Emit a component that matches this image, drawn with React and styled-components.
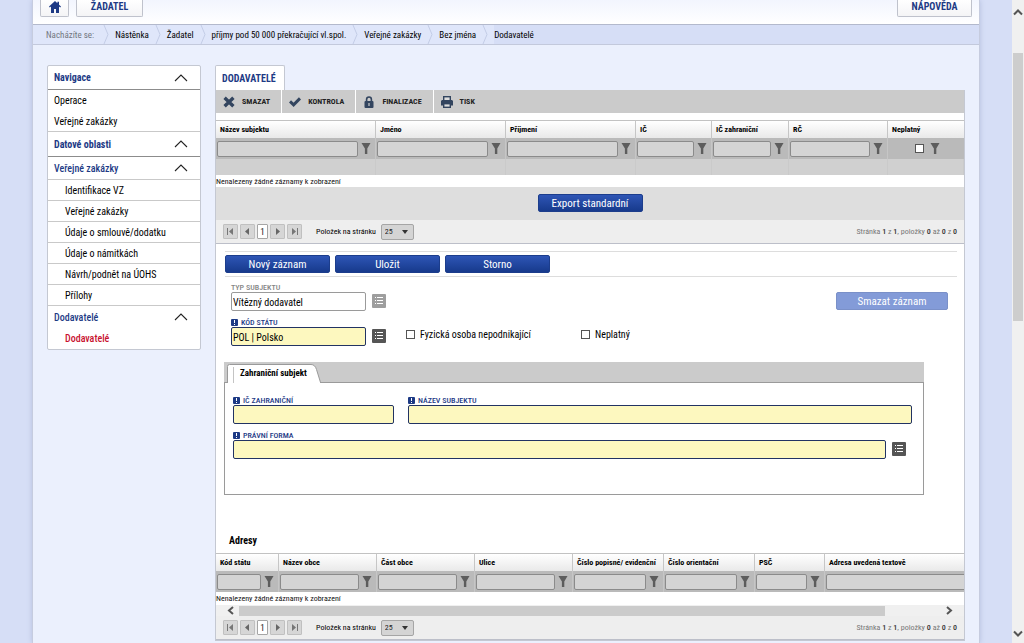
import React from 'react';
import styled, { createGlobalStyle, css } from 'styled-components';

const GlobalStyle = createGlobalStyle`
  * {
    box-sizing: border-box;
  }

  body {
    margin: 0;
    background: #d6def6;
    color: #000000;
    font-family: 'Roboto Condensed', 'Liberation Sans Narrow', Roboto, sans-serif;
    font-size: 10px;
  }

  button,
  input,
  select {
    margin: 0;
    font-family: inherit;
  }
`;

const Shell = styled.div`
  display: flex;
  height: 100vh;
  overflow: hidden;
`;

const Viewport = styled.div`
  flex: 1;
  min-width: 0;
  padding: 0 32px;
  overflow: hidden;
`;

const Page = styled.div`
  min-height: 100%;
  background: #ebf0fd;
  border-left: 1px solid #c6ccdf;
  border-right: 1px solid #c6ccdf;
  box-shadow: 0 0 5px #b4bedd;
`;

const Rail = styled.div`
  display: flex;
  flex-direction: column;
  justify-content: space-between;
  width: 12px;
  padding: 9px 1px 6px;
  background: #f0f0f0;

  svg {
    flex: none;
    width: 10px;
    height: 7px;
  }
`;

const RailTrack = styled.div`
  flex: 1;
  padding-top: 37px;
`;

const RailThumb = styled.div`
  height: 46.5%;
  background: #cdcdcd;
`;

const Header = styled.header`
  display: flex;
  gap: 7px;
  height: 25px;
  padding: 0 7px;
  background: linear-gradient(#f2f5fe, #ffffff);
  border-bottom: 1px solid #b3b9cc;
`;

const HeaderButton = styled.button`
  display: flex;
  align-items: center;
  justify-content: center;
  width: ${(props) => props.$width}px;
  height: 17px;
  padding: 0 0 3px;
  background: linear-gradient(#ffffff, #f4f4f6);
  border: 1px solid #bfc2cc;
  border-top: 0;
  border-radius: 0 0 2px 2px;
  color: #1d3a85;
  font-size: 10px;
  font-weight: 700;

  &:last-child {
    margin-left: auto;
  }
`;

const Breadcrumb = styled.nav`
  display: flex;
  align-items: center;
  height: 20px;
  background: #d6def6;
  border-bottom: 1px solid #c3c9dc;
  font-size: 9px;

  a {
    color: #000000;
    text-decoration: none;
  }

  svg {
    width: 7px;
    height: 19px;
    margin: 0 5px 0 6px;
  }
`;

const Crumbs = styled.div`
  display: flex;
  align-items: center;
  height: 19px;
  padding-left: 13px;
  background: #dfe6fa;
`;

const CrumbLabel = styled.span`
  padding-right: 3px;
  color: #73767f;
`;

const Columns = styled.div`
  display: flex;
  align-items: flex-start;
  gap: 14px;
  padding: 20px 14px 0;
`;

const Sidebar = styled.nav`
  flex: none;
  width: 154px;
  background: #ffffff;
  border: 1px solid #c4c8d2;
  border-radius: 2px;
`;

const NavItem = styled.a`
  display: flex;
  align-items: center;
  justify-content: space-between;
  height: ${(props) => props.$height || 21}px;
  padding: 0 12px 0 ${(props) => (props.$nested ? 17 : 6)}px;
  border-bottom: ${(props) => (props.$line ? `1px solid ${props.$line}` : '0')};
  color: ${(props) => props.$color || '#000000'};
  font-weight: ${(props) => (props.$bold ? 700 : props.$color ? 500 : 400)};
  text-decoration: none;

  svg {
    width: 14px;
    height: 8px;
  }
`;

const Main = styled.main`
  flex: 1;
  min-width: 0;
`;

const PageTab = styled.h1`
  display: inline-block;
  height: 25px;
  margin: 0;
  padding: 0 8px 0 6px;
  background: #ffffff;
  border: 1px solid #c4c8d2;
  border-bottom: 0;
  border-radius: 2px 2px 0 0;
  color: #1d3a85;
  font-size: 10px;
  font-weight: 700;
  line-height: 25px;
  vertical-align: top;
`;

const Panel = styled.section`
  background: #ffffff;
  border: 1px solid #c4c8d2;
  border-top: 0;
`;

const Toolbar = styled.div`
  display: flex;
  height: 23px;
  margin-bottom: 7px;
  background: #cbcbcb;
`;

const ToolButton = styled.button`
  display: flex;
  align-items: center;
  gap: 7px;
  padding: 0 11px 0 7px;
  background: none;
  border: 0;
  border-right: ${(props) => (props.$last ? 0 : '1px solid #ffffff')};
  color: #222222;
  font-size: 8px;
  font-weight: 700;

  svg {
    width: 12px;
    height: 12px;
  }
`;

const TableClip = styled.div`
  overflow: hidden;
`;

const Table = styled.table`
  width: 100%;
  min-width: ${(props) => props.$min || 0}px;
  table-layout: fixed;
  border-collapse: separate;
  border-spacing: 0;

  th,
  td {
    padding: 0;
  }
`;

const HeadCell = styled.th`
  height: 18px;
  background: linear-gradient(#ffffff, #e9e9e9);
  border-top: 1px solid #c2c2c2;
  border-right: 1px solid #c6c6c6;

  span {
    display: block;
    padding-left: 4px;
    font-size: 8px;
    line-height: 17px;
    text-align: left;
    white-space: nowrap;
  }

  &:last-child {
    border-right: 0;
  }
`;

const FilterCell = styled.td`
  background: #bababa;
  border-right: 1px solid #c6c6c6;

  &:last-child {
    border-right: 0;
  }
`;

const FilterBox = styled.div`
  display: flex;
  align-items: center;
  justify-content: ${(props) => (props.$center ? 'center' : 'flex-start')};
  gap: ${(props) => (props.$center ? 6 : 3)}px;
  height: 21px;
  padding: ${(props) => (props.$center ? '0 0 0 3px' : '0 4px 0 1px')};

  svg {
    flex: none;
    width: 10px;
    height: 11px;
  }
`;

const FilterInput = styled.input`
  flex: 1;
  min-width: 0;
  height: 16px;
  padding: 0 2px;
  background: #d4d4d4;
  border: 1px solid #8b8b8b;
  border-radius: 2px;
  font-size: 9px;
`;

const EmptyCell = styled.td`
  height: 16px;
  background: #d0d0d0;
  border-right: 1px solid #cacaca;
`;

const EmptyMessage = styled.p`
  height: ${(props) => props.$height}px;
  margin: 0;
  color: #111111;
  font-size: 8px;
  line-height: 13px;
`;

const ExportBar = styled.div`
  display: flex;
  justify-content: center;
  height: 33px;
  padding-top: 7px;
  background: #dedede;
`;

const Button = styled.button`
  width: ${(props) => props.$width || 105}px;
  height: 18px;
  padding: 0;
  background: linear-gradient(#2e55b5, #173a8c);
  border: 1px solid #1c3d8c;
  border-radius: 2px;
  color: #ffffff;
  font-size: 11px;
  line-height: 15px;

  &:disabled {
    background: #839bd8;
    border-color: #7a90c8;
  }
`;

const PagerRow = styled.div`
  display: flex;
  align-items: center;
  height: 24px;
  padding: 0 7px;
  background: #eeeeee;
  border-bottom: 1px solid #bcbfc9;
  font-size: 8px;
`;

const PagerGroup = styled.div`
  display: flex;
  gap: 2px;
  margin-right: 14px;
`;

const PagerButton = styled.button`
  display: flex;
  align-items: center;
  justify-content: center;
  width: ${(props) => (props.$current ? 11 : 15)}px;
  height: 15px;
  padding: 0;
  background: ${(props) => (props.$current ? '#ffffff' : '#d6d6d6')};
  border: 1px solid ${(props) => (props.$current ? '#a5a5a5' : '#c0c0c0')};
  border-radius: 1px;
  color: #222222;
  font-size: 9px;

  svg {
    width: 9px;
    height: 9px;
  }
`;

const PageSize = styled.label`
  display: flex;
  align-items: center;
  gap: 5px;
`;

const SelectBox = styled.span`
  display: grid;
  width: 33px;
  height: 16px;

  select,
  svg {
    grid-area: 1 / 1;
  }

  select {
    appearance: none;
    width: 33px;
    padding: 0 3px;
    background: #d4d4d4;
    border: 1px solid #a5a5a5;
    border-radius: 2px;
    color: #222222;
    font-size: 8px;
  }

  svg {
    align-self: center;
    justify-self: end;
    width: 6px;
    height: 4px;
    margin-right: 6px;
    pointer-events: none;
  }
`;

const PagerInfo = styled.span`
  margin-left: auto;
  color: #777777;

  b {
    color: #333333;
    font-weight: 500;
  }
`;

const Actions = styled.div`
  display: flex;
  gap: 5px;
  height: 26px;
  margin: 7px 7px 0 9px;
  padding-top: 3px;
  border-top: 1px solid #dddddd;
  border-bottom: 1px solid #dddddd;
`;

const FormRow = styled.div`
  display: flex;
  align-items: flex-end;
  height: ${(props) => props.$height || 35}px;
  padding: 0 16px 0 15px;

  > button:last-child {
    margin-bottom: 1px;
  }
`;

const Field = styled.div`
  display: flex;
  flex-direction: column;
  flex: ${(props) => (props.$width ? 'none' : 1)};
  width: ${(props) => (props.$width ? `${props.$width}px` : 'auto')};
  min-width: 0;
`;

const FieldLabel = styled.label`
  display: flex;
  align-items: center;
  gap: 3px;
  height: 10px;
  color: ${(props) => (props.$required ? '#1d3a85' : '#858585')};
  font-size: 8px;
  font-weight: 500;

  svg {
    width: 7px;
    height: 7px;
  }
`;

const FieldInput = styled.input`
  width: 100%;
  height: 19px;
  padding: 2px 1px 0;
  background: #ffffff;
  border: 1px solid #9a9a9a;
  border-radius: 2px;
  color: #000000;
  font-size: 10px;

  ${(props) =>
    props.$required &&
    css`
      background: #fdf8bf;
      border-color: #223363;
    `}
`;

const ListButton = styled.button`
  display: flex;
  flex: none;
  align-items: center;
  justify-content: center;
  width: 14px;
  height: 14px;
  margin: 0 0 3px 6px;
  padding: 0;
  background: ${(props) => (props.disabled ? '#9e9e9e' : '#555555')};
  border: 0;
  border-radius: 1px;

  svg {
    width: 8px;
    height: 8px;
  }
`;

const CheckLabel = styled.label`
  display: flex;
  align-items: center;
  gap: 5px;
  width: 175px;
  height: 24px;
  margin-left: ${(props) => (props.$first ? 20 : 0)}px;
`;

const Checkbox = styled.input`
  appearance: none;
  flex: none;
  width: 9px;
  height: 9px;
  background: #ffffff;
  border: 1px solid #555555;
`;

const Spacer = styled.div`
  flex: 1;
`;

const Subject = styled.section`
  margin: 16px 40px 0 8px;
  border: 1px solid #9a9a9a;
  border-top: 0;
`;

const SubjectTabs = styled.div`
  display: flex;
  align-items: flex-end;
  height: 21px;
  margin: 0 -1px;
  padding-left: 3px;
  background: #cbcbcb;
  border-bottom: 1px solid #9a9a9a;
`;

const SubjectTab = styled.h2`
  display: grid;
  width: 94px;
  height: 18px;
  margin: 0;
  font-size: 9px;
  font-weight: 700;
  line-height: 18px;

  svg,
  span {
    grid-area: 1 / 1;
  }

  svg {
    width: 94px;
    height: 19px;
  }

  span {
    padding-left: 13px;
  }
`;

const SubjectBody = styled.div`
  padding: 12px 11px 29px 8px;
`;

const SubjectRow = styled.div`
  display: flex;
  align-items: flex-end;
  gap: ${(props) => props.$gap || 0}px;
  height: 29px;
  margin-bottom: 6px;
  padding-right: ${(props) => props.$end || 0}px;
`;

const SectionTitle = styled.h2`
  height: 58px;
  margin: 0;
  padding: 40px 0 0 13px;
  font-size: 10px;
  font-weight: 700;
  line-height: 12px;
`;

const ScrollBar = styled.div`
  display: flex;
  align-items: center;
  height: 11px;
  padding: 0 11px;
  background: #f0f0f0;

  svg {
    flex: none;
    width: 7px;
    height: 9px;
  }
`;

const ScrollTrack = styled.div`
  flex: 1;
  padding: 0 5px;
`;

const ScrollThumb = styled.div`
  width: 92%;
  height: 10px;
  background: #cbcbcb;
`;

const Chevron = () => (
  <svg viewBox="0 0 14 8" fill="none" stroke="#222222" strokeWidth="1.1">
    <path d="M1 7 7 1l6 6" />
  </svg>
);

const Separator = () => (
  <svg viewBox="0 0 7 19" fill="none" stroke="#c3cce6">
    <path d="M1 0 5 9.5 1 19" />
  </svg>
);

const Funnel = () => (
  <svg viewBox="0 0 10 11" fill="#5d5d5d">
    <path d="M0.500 0h9L6.300 5.500V11H3.900V5.500z" />
  </svg>
);

const ListIcon = () => (
  <svg viewBox="0 0 8 8" fill="#ffffff">
    <path d="M0 0h1v1H0zM2 0h6v1H2zM0 3h1v1H0zM2 3h6v1H2zM0 6h1v1H0zM2 6h6v1H2z" />
  </svg>
);

const RequiredMark = () => (
  <svg viewBox="0 0 7 7">
    <rect width="7" height="7" rx="1" fill="#1d3a85" />
    <path d="M3 1h1v3H3zM3 5h1v1H3z" fill="#ffffff" />
  </svg>
);

const HomeIcon = () => (
  <svg width="12" height="12" viewBox="0 0 12 12" fill="#1d3a85">
    <path d="M6 0 0 5.6l.8.9L2 5.5V12h3V8h2v4h3V5.5l1.2 1 .8-.9-2-1.9V.8H8.4v1.4z" />
  </svg>
);

const toolbarIcons = {
  delete: (
    <svg viewBox="0 0 12 12" stroke="#33455f" strokeWidth="3.4">
      <path d="m1.6 1.8 8.8 8.4M10.4 1.8 1.6 10.2" />
    </svg>
  ),
  check: (
    <svg viewBox="0 0 12 12" fill="none" stroke="#33455f" strokeWidth="3">
      <path d="m1 5.4 3.6 3.4L11 2.4" />
    </svg>
  ),
  lock: (
    <svg viewBox="0 0 12 12">
      <path d="M3.6 6V3.4a2.4 2.4 0 0 1 4.8 0V6" fill="none" stroke="#33455f" strokeWidth="1.6" />
      <rect x="1.5" y="5" width="9" height="7" rx="1" fill="#33455f" />
      <path d="M5.4 7h1.2v3H5.4z" fill="#cbcbcb" />
    </svg>
  ),
  print: (
    <svg viewBox="0 0 12 12">
      <path d="M2 0h8v4H2z" fill="#33455f" />
      <path d="M3.400 1.400h5.200V4H3.400z" fill="#dddddd" />
      <path d="M1 4h10l1 1v4.500H0V5z" fill="#33455f" />
      <path d="M2 8h8v4H2z" fill="#33455f" />
      <path d="M3.400 8.400h5.200v2.200H3.400z" fill="#dddddd" />
    </svg>
  ),
};

const Pager = ({ id }) => (
  <PagerRow>
    <PagerGroup>
      <PagerButton type="button" aria-label="První">
        <svg viewBox="0 0 9 9" fill="#777777">
          <path d="M1 1h1v7H1zM7 1v7L3 4.5z" />
        </svg>
      </PagerButton>
      <PagerButton type="button" aria-label="Předchozí">
        <svg viewBox="0 0 9 9" fill="#666666">
          <path d="M6 1v7L2 4.5z" />
        </svg>
      </PagerButton>
      <PagerButton type="button" $current>
        1
      </PagerButton>
      <PagerButton type="button" aria-label="Další">
        <svg viewBox="0 0 9 9" fill="#666666">
          <path d="M3 1v7l4-3.500z" />
        </svg>
      </PagerButton>
      <PagerButton type="button" aria-label="Poslední">
        <svg viewBox="0 0 9 9" fill="#777777">
          <path d="M7 1h1v7H7zM2 1v7l4-3.500z" />
        </svg>
      </PagerButton>
    </PagerGroup>
    <PageSize htmlFor={id}>
      Položek na stránku
      <SelectBox>
        <select id={id} defaultValue="25">
          <option>25</option>
        </select>
        <svg viewBox="0 0 6 4" fill="#333333">
          <path d="M0 0h6L3 4z" />
        </svg>
      </SelectBox>
    </PageSize>
    <PagerInfo>
      Stránka <b>1</b> z <b>1</b>, položky <b>0</b> až <b>0</b> z <b>0</b>
    </PagerInfo>
  </PagerRow>
);

const Grid = ({ columns, min, emptyRow }) => (
  <TableClip>
    <Table $min={min}>
      <colgroup>
        {columns.map((column) => (
          <col key={column.name} width={column.width} />
        ))}
      </colgroup>
      <thead>
        <tr>
          {columns.map((column) => (
            <HeadCell key={column.name} scope="col">
              <span>{column.name}</span>
            </HeadCell>
          ))}
        </tr>
      </thead>
      <tbody>
        <tr>
          {columns.map((column) => (
            <FilterCell key={column.name}>
              <FilterBox $center={column.checkbox}>
                {column.checkbox ? (
                  <Checkbox type="checkbox" aria-label={column.name} />
                ) : (
                  <FilterInput type="text" aria-label={column.name} />
                )}
                <Funnel />
              </FilterBox>
            </FilterCell>
          ))}
        </tr>
        {emptyRow && (
          <tr>
            {columns.map((column) => (
              <EmptyCell key={column.name} />
            ))}
          </tr>
        )}
      </tbody>
    </Table>
  </TableClip>
);

const TextField = ({ id, label, value, width, required, disabled }) => (
  <Field $width={width}>
    <FieldLabel htmlFor={id} $required={required}>
      {required && <RequiredMark />}
      {label}
    </FieldLabel>
    <FieldInput id={id} type="text" defaultValue={value} $required={required} readOnly={disabled} />
  </Field>
);

const crumbs = ['Nástěnka', 'Žadatel', 'příjmy pod 50 000 překračující vl.spol.', 'Veřejné zakázky', 'Bez jména'];

const navItems = [
  { name: 'Navigace', height: 24, bold: true, color: '#1d3a85', line: '#8c8c8c', open: true },
  { name: 'Operace' },
  { name: 'Veřejné zakázky', line: '#c9c9c9' },
  { name: 'Datové oblasti', height: 25, bold: true, color: '#1d3a85', line: '#8c8c8c', open: true },
  { name: 'Veřejné zakázky', height: 23, color: '#1d3a85', line: '#c9c9c9', open: true },
  { name: 'Identifikace VZ', nested: true, line: '#c9c9c9' },
  { name: 'Veřejné zakázky', nested: true, line: '#c9c9c9' },
  { name: 'Údaje o smlouvě/dodatku', nested: true, line: '#c9c9c9' },
  { name: 'Údaje o námitkách', nested: true, line: '#c9c9c9' },
  { name: 'Návrh/podnět na ÚOHS', nested: true, line: '#c9c9c9' },
  { name: 'Přílohy', nested: true, line: '#c9c9c9' },
  { name: 'Dodavatelé', height: 22, color: '#1d3a85', open: true },
  { name: 'Dodavatelé', nested: true, color: '#c8102e' },
];

const tools = [
  { name: 'SMAZAT', icon: 'delete' },
  { name: 'KONTROLA', icon: 'check' },
  { name: 'FINALIZACE', icon: 'lock' },
  { name: 'TISK', icon: 'print' },
];

const supplierColumns = [
  { name: 'Název subjektu', width: 160 },
  { name: 'Jméno', width: 130 },
  { name: 'Příjmení', width: 130 },
  { name: 'IČ', width: 76 },
  { name: 'IČ zahraniční', width: 77 },
  { name: 'RČ', width: 99 },
  { name: 'Neplatný', checkbox: true },
];

const addressColumns = [
  { name: 'Kód státu', width: 63 },
  { name: 'Název obce', width: 98 },
  { name: 'Část obce', width: 98 },
  { name: 'Ulice', width: 98 },
  { name: 'Číslo popisné/ evidenční', width: 91 },
  { name: 'Číslo orientační', width: 91 },
  { name: 'PSČ', width: 70 },
  { name: 'Adresa uvedená textově' },
];

const App = () => (
  <Shell>
    <GlobalStyle />
    <Viewport>
      <Page>
        <Header>
          <HeaderButton type="button" aria-label="Domů" $width={29}>
            <HomeIcon />
          </HeaderButton>
          <HeaderButton type="button" $width={67}>
            ŽADATEL
          </HeaderButton>
          <HeaderButton type="button" $width={75}>
            NÁPOVĚDA
          </HeaderButton>
        </Header>
        <Breadcrumb>
          <Crumbs>
            <CrumbLabel>Nacházíte se:</CrumbLabel>
            <Separator />
            {crumbs.map((crumb) => (
              <React.Fragment key={crumb}>
                <a href="#crumb">{crumb}</a>
                <Separator />
              </React.Fragment>
            ))}
          </Crumbs>
          <a href="#crumb">Dodavatelé</a>
        </Breadcrumb>
        <Columns>
          <Sidebar>
            {navItems.map((item, index) => (
              <NavItem
                key={index}
                href="#nav"
                $height={item.height}
                $nested={item.nested}
                $line={item.line}
                $color={item.color}
                $bold={item.bold}
              >
                {item.name}
                {item.open && <Chevron />}
              </NavItem>
            ))}
          </Sidebar>
          <Main>
            <PageTab>DODAVATELÉ</PageTab>
            <Panel>
              <Toolbar>
                {tools.map((tool, index) => (
                  <ToolButton key={tool.name} type="button" $last={index === tools.length - 1}>
                    {toolbarIcons[tool.icon]}
                    {tool.name}
                  </ToolButton>
                ))}
              </Toolbar>
              <Grid columns={supplierColumns} emptyRow />
              <EmptyMessage $height={12}>Nenalezeny žádné záznamy k zobrazení</EmptyMessage>
              <ExportBar>
                <Button type="button">Export standardní</Button>
              </ExportBar>
              <Pager id="supplier-page-size" />
              <Actions>
                <Button type="button">Nový záznam</Button>
                <Button type="button">Uložit</Button>
                <Button type="button">Storno</Button>
              </Actions>
              <FormRow $height={34}>
                <TextField id="subject-type" label="TYP SUBJEKTU" value="Vítězný dodavatel" width={135} disabled />
                <ListButton type="button" aria-label="Vybrat typ subjektu" disabled>
                  <ListIcon />
                </ListButton>
                <Spacer />
                <Button type="button" $width={112} disabled>
                  Smazat záznam
                </Button>
              </FormRow>
              <FormRow>
                <TextField id="country" label="KÓD STÁTU" value="POL | Polsko" width={135} required />
                <ListButton type="button" aria-label="Vybrat kód státu">
                  <ListIcon />
                </ListButton>
                <CheckLabel $first>
                  <Checkbox type="checkbox" />
                  Fyzická osoba nepodnikající
                </CheckLabel>
                <CheckLabel>
                  <Checkbox type="checkbox" />
                  Neplatný
                </CheckLabel>
              </FormRow>
              <Subject>
                <SubjectTabs>
                  <SubjectTab>
                    <svg viewBox="0 0 94 19" fill="#ffffff" stroke="#9a9a9a">
                      <path d="M.5 20V2.500a2 2 0 0 1 2-2H84q4 0 5.500 5L94 20" />
                      <path d="M6.500 3v16" stroke="#c4c4c4" />
                    </svg>
                    <span>Zahraniční subjekt</span>
                  </SubjectTab>
                </SubjectTabs>
                <SubjectBody>
                  <SubjectRow $gap={14}>
                    <TextField id="foreign-id" label="IČ ZAHRANIČNÍ" width={161} required />
                    <TextField id="subject-name" label="NÁZEV SUBJEKTU" required />
                  </SubjectRow>
                  <SubjectRow $end={6}>
                    <TextField id="legal-form" label="PRÁVNÍ FORMA" required />
                    <ListButton type="button" aria-label="Vybrat právní formu">
                      <ListIcon />
                    </ListButton>
                  </SubjectRow>
                </SubjectBody>
              </Subject>
              <SectionTitle>Adresy</SectionTitle>
              <Grid columns={addressColumns} min={909} />
              <EmptyMessage $height={13}>Nenalezeny žádné záznamy k zobrazení</EmptyMessage>
              <ScrollBar>
                <svg viewBox="0 0 7 9" fill="none" stroke="#555555" strokeWidth="2">
                  <path d="M6 1 2 4.500 6 8" />
                </svg>
                <ScrollTrack>
                  <ScrollThumb />
                </ScrollTrack>
                <svg viewBox="0 0 7 9" fill="none" stroke="#555555" strokeWidth="2">
                  <path d="m1 1 4 3.500L1 8" />
                </svg>
              </ScrollBar>
              <Pager id="address-page-size" />
            </Panel>
          </Main>
        </Columns>
      </Page>
    </Viewport>
    <Rail>
      <svg viewBox="0 0 10 7" fill="none" stroke="#555555" strokeWidth="2">
        <path d="m1 5.500 4-4 4 4" />
      </svg>
      <RailTrack>
        <RailThumb />
      </RailTrack>
      <svg viewBox="0 0 10 7" fill="none" stroke="#555555" strokeWidth="2">
        <path d="m1 1.500 4 4 4-4" />
      </svg>
    </Rail>
  </Shell>
);

export default App;
